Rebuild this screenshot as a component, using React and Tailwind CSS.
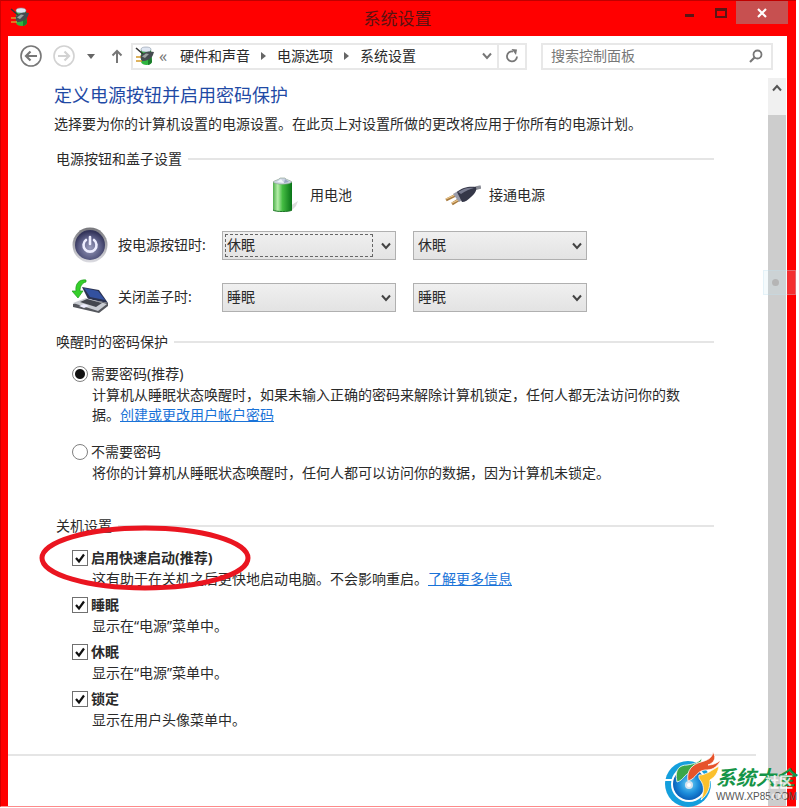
import { useState } from "react";

function PowerIcon({ className }) {
  return (
    <svg viewBox="0 0 20 20" className={className} aria-hidden="true">
      <path d="M6 4 C6 1 16 1 16 4 L17 16 C16 20 7 20 6 16 Z" fill="#2fb53f" />
      <path d="M13 4 L16 4 L17 16 C16 18 14 19 13 19 Z" fill="#1c7a2c" />
      <ellipse cx="11" cy="3.500" rx="5" ry="2.500" fill="#dfe6f2" stroke="#8a94a6" strokeWidth="0.6" />
      <path d="M1 2 L8 8" stroke="#333" strokeWidth="1.600" />
      <path d="M5 11 C6 7 12 5 19 6 L18 9 C16 13 12 15 7 15 Z" fill="#454b50" />
      <path d="M7 10.500 L11 7.500 L14 8 L10 12 Z" fill="#9aa19f" />
      <path d="M1 11 H6 M1 15 H7" stroke="#d39a2b" strokeWidth="1.700" />
    </svg>
  );
}

function BatteryIcon() {
  return (
    <svg viewBox="0 0 36 36" className="size-9" aria-hidden="true">
      <defs>
        <linearGradient id="cell">
          <stop offset="0" stopColor="#4fae4c" />
          <stop offset="0.25" stopColor="#b5efa9" />
          <stop offset="0.5" stopColor="#45bd43" />
          <stop offset="1" stopColor="#087417" />
        </linearGradient>
      </defs>
      <path d="M24 29 L32 24 L30 29 L25 34 Z" fill="#ddd" />
      <path d="M7 5 L26 5 L26 33 C24 35 9 35 7 33 Z" fill="url(#cell)" />
      <path d="M7 33 C9 35 24 35 26 33" fill="none" stroke="#1a7424" />
      <path d="M7 5 C9 3 13 3 14 1 H19 C20 3 24 3 26 5 C23 8 10 8 7 5 Z" fill="#cdd5e4" stroke="#86a08a" strokeWidth="0.6" />
      <path d="M11 5 L15 2 L18 6 Z" fill="#f2f5fa" />
      <path d="M19 2 L23 5 L18 6 Z" fill="#9ba7c2" />
    </svg>
  );
}

function PlugIcon() {
  return (
    <svg viewBox="0 0 36 36" className="size-9" aria-hidden="true">
      <path d="M28 14 C30 10 33 11 36 10" fill="none" stroke="#8b8d96" strokeWidth="3.500" />
      <path d="M1 23 L11 18 M7 27 L15 22" stroke="#a77a3e" strokeWidth="3" />
      <path d="M1 22 L10 18 M7 26 L15 22" stroke="#ecc98f" strokeWidth="1.200" />
      <path d="M8 17 L13 14 L19 22 L14 25 Z" fill="#9a9ba8" />
      <path d="M12 15 C17 10 25 9 31 10 C32 13 30 17 26 20 C23 23 20 25 17 25 Z" fill="#353748" />
      <path d="M13 15 C19 11 24 10 29 11 C25 12 20 14 16 17 Z" fill="#777a8e" />
    </svg>
  );
}

function PowerButtonIcon() {
  return (
    <svg viewBox="0 0 36 36" className="size-9" aria-hidden="true">
      <defs>
        <radialGradient id="knob" cx="0.5" cy="0.6" r="0.55">
          <stop offset="0" stopColor="#9a9cbd" />
          <stop offset="0.7" stopColor="#565880" />
          <stop offset="1" stopColor="#34355a" />
        </radialGradient>
        <linearGradient id="rim" x2="0" y2="1">
          <stop offset="0" stopColor="#77777c" />
          <stop offset="1" stopColor="#dcdce2" />
        </linearGradient>
      </defs>
      <circle cx="18" cy="18" r="17.500" fill="url(#rim)" />
      <circle cx="18" cy="18" r="15" fill="url(#knob)" />
      <path d="M14 13 A6.500 6.500 0 1 0 22 13" fill="none" stroke="#eef" strokeWidth="2.600" strokeLinecap="round" />
      <path d="M18 10 V17" stroke="#eef" strokeWidth="2.600" strokeLinecap="round" />
    </svg>
  );
}

function LidIcon() {
  return (
    <svg viewBox="0 0 36 36" className="size-9" aria-hidden="true">
      <path d="M10 8 L27 11 L36 24 L16 20 Z" fill="#2b3350" />
      <path d="M12 9 L26 12 L33 21 L18 18 Z" fill="#33519f" />
      <path d="M1 25 L15 20 L36 24 L36 27 L27 34 L1 28 Z" fill="#55575d" />
      <path d="M1 24 L14 19 L35 25 L26 32 Z" fill="#c9ccd2" />
      <path d="M8 23 L15 20 L30 24 L24 28 Z" fill="#44474f" />
      <path d="M7 27 L12 25 L17 27 L12 29 Z" fill="#eef" />
      <path d="M14 1 C7 0 3 5 4 12 L0 12 L6 19 L11 12 L8 12 C8 7 10 4 14 3 Z" fill="#35cf2a" stroke="#1c9a1c" strokeWidth="0.7" />
    </svg>
  );
}

function Chevron({ className }) {
  return (
    <svg viewBox="0 0 10 8" className={className} aria-hidden="true">
      <path d="M1 1.500 L5 6 L9 1.500" fill="none" stroke="currentColor" strokeWidth="2" />
    </svg>
  );
}

function Crumb({ children }) {
  return <button className="whitespace-nowrap">{children}</button>;
}

function CrumbArrow() {
  return (
    <svg viewBox="0 0 5 8" className="mx-[11px] h-2 w-[5px] shrink-0" aria-hidden="true">
      <path d="M0 0 L5 4 L0 8 Z" fill="#666" />
    </svg>
  );
}

function SectionTitle({ children }) {
  return (
    <div className="flex items-center gap-[6px] pl-[2px]">
      <h2>{children}</h2>
      <div className="h-[2px] flex-1 bg-[#e5e5e5]" />
    </div>
  );
}

function PowerSelect({ label, value, focused }) {
  const [action, setAction] = useState(value);

  return (
    <div className="relative w-[174px]">
      <select
        aria-label={label}
        value={action}
        onChange={(e) => setAction(e.target.value)}
        className="block h-[29px] w-full appearance-none border border-[#b0b0b0] bg-linear-to-b from-[#f0f0f0] to-[#e3e3e3] pl-1 outline-none"
      >
        <option>不采取任何操作</option>
        <option>睡眠</option>
        <option>休眠</option>
        <option>关机</option>
      </select>
      {focused && (
        <div className="pointer-events-none absolute inset-y-[3px] left-[3px] right-[23px] border border-dashed border-[#666]" />
      )}
      <Chevron className="pointer-events-none absolute right-[5px] top-[11px] h-2 w-[10px] text-[#444]" />
    </div>
  );
}

function SettingRow({ icon, label, battery, plugged, focused }) {
  return (
    <div className="grid grid-cols-[150px_191px_191px] items-center pl-[18px]">
      <div className="flex items-center gap-[10px]">
        {icon}
        <span>{label}</span>
      </div>
      <PowerSelect label={`${label} 用电池`} value={battery} focused={focused} />
      <PowerSelect label={`${label} 接通电源`} value={plugged} />
    </div>
  );
}

function RadioItem({ id, checked, onChange, label, children }) {
  return (
    <div className="pl-[18px]">
      <div className="flex items-center gap-[3px]">
        <input
          type="radio"
          id={id}
          name="password"
          checked={checked}
          onChange={onChange}
          className="size-4 appearance-none rounded-full border border-[#808080] bg-white bg-radial checked:from-[#111] checked:from-45% checked:to-white checked:to-55%"
        />
        <label htmlFor={id}>{label}</label>
      </div>
      <p className="ml-5 mt-px max-w-[590px]">{children}</p>
    </div>
  );
}

function CheckItem({ id, label, circled, children }) {
  const [on, setOn] = useState(true);

  return (
    <div className="relative pl-[18px]">
      <div className="flex items-center gap-[3px]">
        <span className="relative size-4">
          <input
            type="checkbox"
            id={id}
            checked={on}
            onChange={() => setOn(!on)}
            className="peer block size-4 appearance-none border border-[#707070] bg-white"
          />
          <svg
            viewBox="0 0 16 16"
            className="pointer-events-none invisible absolute inset-0 size-4 peer-checked:visible"
            aria-hidden="true"
          >
            <path d="M4 8 L7 11.500 L12 4.500" fill="none" stroke="#111" strokeWidth="2.200" />
          </svg>
        </span>
        <label htmlFor={id} className="font-bold">{label}</label>
      </div>
      <p className="ml-5 mt-px">{children}</p>

      {circled && (
        <svg
          viewBox="0 0 214 68"
          className="pointer-events-none absolute -left-4 -top-6 h-[68px] w-[214px]"
          aria-hidden="true"
        >
          <ellipse cx="107" cy="34" rx="103" ry="30" fill="none" stroke="#ea1520" strokeWidth="5" />
        </svg>
      )}
    </div>
  );
}

function SiteMark() {
  return (
    <div className="pointer-events-none absolute bottom-0 right-[2px] flex items-end">
      <svg viewBox="0 0 56 56" className="-mr-1 size-14" aria-hidden="true">
        <defs>
          <radialGradient id="disc">
            <stop offset="0" stopColor="#6fd3f5" />
            <stop offset="0.6" stopColor="#1d8ddb" />
            <stop offset="1" stopColor="#0a5fb8" />
          </radialGradient>
        </defs>
        <circle cx="24" cy="32" r="23" fill="#149fdd" />
        <circle cx="25" cy="32" r="18" fill="#fff" />
        <path d="M0 28 H8 M40 28 H50" stroke="#fff" strokeWidth="2" />
        <circle cx="25" cy="32" r="16" fill="url(#disc)" />
        <circle cx="25" cy="33" r="4" fill="#d6e3ee" />
        <circle cx="25" cy="33" r="2" fill="#fff" />
        <path d="M13 30 C10 17 16 13 23 13 C29 12 34 11 38 6 C37 12 35 15 30 17 C34 17 37 16 40 13 C36 21 31 21 26 21 C20 22 20 28 13 30 Z" fill="#3aa648" stroke="#fff" strokeWidth="0.8" />
        <path d="M24 29 C22 18 29 12 37 10 C44 8 48 6 49 0 C53 6 50 11 44 13 C49 13 53 11 57 8 C52 17 47 18 41 18 C32 19 33 26 24 29 Z" fill="#e6532b" stroke="#fff" strokeWidth="0.8" />
        <path d="M35 23 C42 23 48 18 55 14 C54 21 51 25 46 28 C46 36 44 42 37 48 C40 40 40 35 38 31 C37 28 34 27 35 23 Z" fill="#fbc02d" stroke="#fff" strokeWidth="0.8" />
      </svg>
      <div className="relative whitespace-nowrap pb-1">
        <div className="text-[20px] font-bold italic leading-[24px] text-[#159447]">系统大全</div>
        <div className="font-['Liberation_Sans'] text-[10px] leading-[14px] text-[#555]">WWW.XP85.COM</div>
        <div className="absolute right-1 top-2 text-right text-[14px] font-bold leading-[16px] text-white/80">
          社区
          <div className="pr-2 text-[12px] leading-[12px] text-white/50">.cn</div>
        </div>
      </div>
    </div>
  );
}

function App() {
  const [needPassword, setNeedPassword] = useState(true);

  return (
    <div className="relative flex min-h-screen flex-col overflow-hidden bg-white pb-px pr-[3px] font-['Noto_Sans','Noto_Sans_CJK_SC',sans-serif] text-[14px] leading-[20px] text-[#2a2a2a]">
      <div className="flex flex-1 flex-col border-b border-l border-t border-b-[#ff8a8a] border-l-[#d00000] border-t-[#c00000] bg-[#ff0000] pl-[7px] pr-[9px]">

        {/* TITLE BAR */}
        <div className="grid h-[35px] grid-cols-[1fr_auto_1fr]">
          <PowerIcon className="ml-[2px] mt-[6px] size-5" />
          <h1 className="self-center text-[17px] text-[#5a1212]">系统设置</h1>
          <div className="flex justify-end">
            <button aria-label="最小化" className="flex h-6 w-[31px] items-center justify-center pt-1">
              <span className="h-[3px] w-[9px] bg-[#5c1515]" />
            </button>
            <button aria-label="最大化" className="flex h-6 w-[31px] items-center justify-center">
              <span className="h-[10px] w-3 border-2 border-t-[3px] border-[#5c1515]" />
            </button>
            <button aria-label="关闭" className="-mr-px flex h-[23px] w-[52px] items-center justify-center bg-[#c75050]">
              <svg viewBox="0 0 10 10" className="size-[10px]" aria-hidden="true">
                <path d="M1 1 L9 9 M9 1 L1 9" stroke="#fff" strokeWidth="2.200" />
              </svg>
            </button>
          </div>
        </div>

        {/* NAVIGATION */}
        <div className="flex h-10 items-center bg-white pl-3 pr-[14px]">
          <button aria-label="后退">
            <svg viewBox="0 0 22 22" className="size-[22px]" fill="none" stroke="#777" aria-hidden="true">
              <circle cx="11" cy="11" r="10" strokeWidth="1.600" />
              <path d="M17 11 H6 M10.500 6.500 L6 11 L10.500 15.500" strokeWidth="2.200" />
            </svg>
          </button>
          <button aria-label="前进" className="ml-[11px]">
            <svg viewBox="0 0 22 22" className="size-[22px]" fill="none" stroke="#d2d2d2" aria-hidden="true">
              <circle cx="11" cy="11" r="10" strokeWidth="1.600" />
              <path d="M5 11 H16 M11.500 6.500 L16 11 L11.500 15.500" strokeWidth="2.200" />
            </svg>
          </button>
          <button aria-label="最近浏览的位置" className="ml-3">
            <svg viewBox="0 0 8 5" className="h-[5px] w-2" aria-hidden="true">
              <path d="M0 0 H8 L4 5 Z" fill="#666" />
            </svg>
          </button>
          <button aria-label="上移" className="ml-4">
            <svg viewBox="0 0 12 14" className="h-[14px] w-3" fill="none" stroke="#777" strokeWidth="2" aria-hidden="true">
              <path d="M6 14 V2 M1.500 6.500 L6 2 L10.500 6.500" />
            </svg>
          </button>

          <div className="ml-2 flex h-[27px] flex-1 items-center border-2 border-[#e8e8e8] pl-[2px]">
            <PowerIcon className="size-5" />
            <span className="ml-1 w-[21px] text-[16px] text-[#777]">«</span>
            <Crumb>硬件和声音</Crumb>
            <CrumbArrow />
            <Crumb>电源选项</Crumb>
            <CrumbArrow />
            <Crumb>系统设置</Crumb>
            <button aria-label="上一个位置" className="ml-auto mr-[5px]">
              <Chevron className="h-2 w-[10px] text-[#777]" />
            </button>
            <button aria-label="刷新" className="flex h-full w-7 items-center justify-center border-l-2 border-[#e8e8e8]">
              <svg viewBox="0 0 14 14" className="size-[14px]" fill="none" stroke="#777" strokeWidth="1.800" aria-hidden="true">
                <path d="M8 2.500 A5 5 0 1 0 12 7.500" />
                <path d="M6.500 0 L12 0.500 L11 6 Z" fill="#777" stroke="none" />
              </svg>
            </button>
          </div>

          <div className="ml-[14px] flex h-[27px] w-[232px] items-center border-2 border-[#e8e8e8] px-2">
            <input
              aria-label="搜索控制面板"
              placeholder="搜索控制面板"
              className="min-w-0 flex-1 outline-none placeholder:text-[#777]"
            />
            <svg viewBox="0 0 14 14" className="size-[14px]" fill="none" stroke="#777" aria-hidden="true">
              <circle cx="8.500" cy="5.500" r="4" strokeWidth="1.800" />
              <path d="M5.500 8.500 L1 13" strokeWidth="2.200" />
            </svg>
          </div>
        </div>

        <div className="flex flex-1 bg-white pr-px">
          {/* SETTINGS */}
          <main className="flex-1">
            <div className="pl-[46px] pr-[54px] pt-[7px]">
              <h2 className="text-[18px] leading-[24px] text-[#1f4aa5]">定义电源按钮并启用密码保护</h2>
              <p className="mt-[7px] whitespace-nowrap">
                选择要为你的计算机设置的电源设置。在此页上对设置所做的更改将应用于你所有的电源计划。
              </p>

              <section className="mt-[15px]">
                <SectionTitle>电源按钮和盖子设置</SectionTitle>
                <div className="mb-[14px] mt-2 grid grid-cols-[150px_191px_191px] pl-[18px]">
                  <div className="col-start-2 flex items-center gap-2 pl-11">
                    <BatteryIcon />
                    用电池
                  </div>
                  <div className="flex items-center gap-2 pl-8">
                    <PlugIcon />
                    接通电源
                  </div>
                </div>
                <div className="space-y-4">
                  <SettingRow icon={<PowerButtonIcon />} label="按电源按钮时:" battery="休眠" plugged="休眠" focused />
                  <SettingRow icon={<LidIcon />} label="关闭盖子时:" battery="睡眠" plugged="睡眠" />
                </div>
              </section>

              <section className="mt-[17px]">
                <SectionTitle>唤醒时的密码保护</SectionTitle>
                <div className="mt-3 space-y-[17px]">
                  <RadioItem
                    id="need"
                    label="需要密码(推荐)"
                    checked={needPassword}
                    onChange={() => setNeedPassword(true)}
                  >
                    计算机从睡眠状态唤醒时，如果未输入正确的密码来解除计算机锁定，任何人都无法访问你的数据。
                    <a href="#password" className="text-[#1a73d8] underline">创建或更改用户帐户密码</a>
                  </RadioItem>
                  <RadioItem
                    id="noneed"
                    label="不需要密码"
                    checked={!needPassword}
                    onChange={() => setNeedPassword(false)}
                  >
                    将你的计算机从睡眠状态唤醒时，任何人都可以访问你的数据，因为计算机未锁定。
                  </RadioItem>
                </div>
              </section>

              <section className="mt-[33px]">
                <SectionTitle>关机设置</SectionTitle>
                <div className="mt-3 space-y-[6px]">
                  <CheckItem id="fast" label="启用快速启动(推荐)" circled>
                    这有助于在关机之后更快地启动电脑。不会影响重启。
                    <a href="#more" className="text-[#1a73d8] underline">了解更多信息</a>
                  </CheckItem>
                  <CheckItem id="sleep" label="睡眠">显示在“电源”菜单中。</CheckItem>
                  <CheckItem id="hibernate" label="休眠">显示在“电源”菜单中。</CheckItem>
                  <CheckItem id="lock" label="锁定">显示在用户头像菜单中。</CheckItem>
                </div>
              </section>
            </div>
            <div className="mr-3 mt-6 h-[2px] bg-[#e5e5e5]" />
          </main>

          {/* SCROLLBAR */}
          <div className="mt-[2px] flex w-[18px] flex-col bg-[#cdcdcd]">
            <button aria-label="向上滚动" className="flex h-[37px] justify-center bg-[#f0f0f0] pt-[6px]">
              <Chevron className="h-2 w-[10px] rotate-180 text-[#555]" />
            </button>
          </div>
        </div>
      </div>

      {/* side handle over the scrollbar */}
      <div className="absolute right-[3px] top-[270px] flex h-[25px] w-[33px] items-center border border-[#bfe0f0]/30 bg-[#c9e4f0]/20 pl-2">
        <span className="size-[7px] rounded-full bg-[#b5b5b5]" />
      </div>

      <SiteMark />
    </div>
  );
}

export default App;
